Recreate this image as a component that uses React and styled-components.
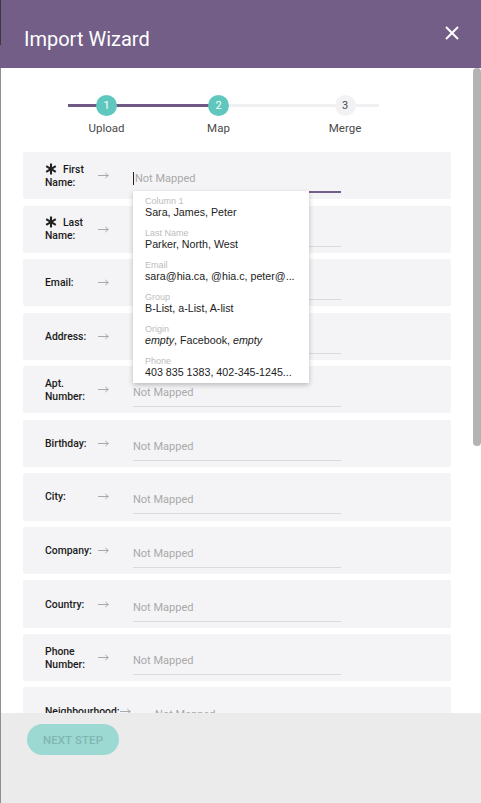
import React from "react";
import styled, { createGlobalStyle } from "styled-components";

const Global = createGlobalStyle`
  html, body { margin: 0; padding: 0; background: #fff; overflow: hidden; }
  * { box-sizing: border-box; }
`;

const Page = styled.div`
  width: 481px;
  height: 803px;
  display: flex;
  flex-direction: column;
  font-family: Roboto, "Liberation Sans", sans-serif;
`;

const Header = styled.header`
  height: 68px;
  flex: 0 0 68px;
  display: flex;
  align-items: flex-start;
  padding: 26px 22px 0 24px;
  background: linear-gradient(#3b3b3b, #3b3b3b) left top / 1px 45px no-repeat, #735e88;
`;

const Title = styled.h1`
  flex: 1;
  margin: 1px 0 0;
  font-weight: 400;
  font-size: 20px;
  line-height: 24px;
  color: #fff;
`;

const CloseButton = styled.button`
  border: 0;
  padding: 0;
  background: none;
  width: 14px;
  height: 14px;
  display: flex;
`;

const Body = styled.div`
  height: 645px;
  flex: 0 0 645px;
  display: flex;
  overflow: hidden;
  box-shadow: inset 1px 0 0 #8f8f8f;
`;

const Content = styled.div`
  flex: 1;
  padding-top: 27px;
  overflow: hidden;
`;

const ScrollTrack = styled.div`
  width: 8px;
  flex: 0 0 8px;
`;

const Thumb = styled.div`
  height: 378px;
  border-radius: 4px;
  background: #b3b3b3;
`;

const Stepper = styled.div`
  margin-left: 68px;
  width: 311px;
  display: grid;
  grid-template-columns: 77px 147px 106px;
  background: linear-gradient(to right, #6f5a86 0 150.5px, #f0f0f2 150.5px 100%) 0 9px / 100% 3px no-repeat;
`;

const Step = styled.div`
  display: flex;
  flex-direction: column;
  align-items: center;
`;

const Circle = styled.div`
  width: 21px;
  height: 21px;
  border-radius: 50%;
  display: flex;
  align-items: center;
  justify-content: center;
  font-size: 11px;
  background: ${(p) => (p.$done ? "#5fc7be" : "#f2f2f4")};
  color: ${(p) => (p.$done ? "#fff" : "#4a4a4a")};
`;

const StepLabel = styled.div`
  margin-top: 5px;
  font-size: 11.5px;
  line-height: 14px;
  color: #4a4a4a;
`;

const Rows = styled.div`
  margin-top: 17px;
  padding: 0 22px 0 23px;
  display: flex;
  flex-direction: column;
  gap: 6.26px;
`;

const Row = styled.div`
  height: 47.3px;
  flex: 0 0 47.3px;
  display: flex;
  align-items: center;
  padding-left: 22px;
  background: #f4f4f6;
  border-radius: 2px;
`;

const Label = styled.div`
  min-width: 52.5px;
  flex: 0 0 auto;
  font-size: 10.4px;
  font-weight: 500;
  line-height: 13px;
  color: #1a1a1a;
  white-space: nowrap;
`;

const Star = styled.svg`
  width: 12px;
  height: 12px;
  vertical-align: -2px;
  margin-right: 6px;
`;

const Arrow = styled.svg`
  width: 11px;
  height: 7px;
  flex: 0 0 11px;
  margin-left: 0.5px;
`;

const Field = styled.div`
  position: relative;
  width: 208px;
  height: 24px;
  margin: 11px 0 0 24px;
  padding-bottom: 3px;
  display: flex;
  align-items: center;
  border-bottom: ${(p) => (p.$focused ? "2px solid #735e88" : "1px solid #dadada")};
`;

const Caret = styled.span`
  width: 1px;
  height: 13px;
  background: #222;
  margin-right: 1px;
`;

const Placeholder = styled.span`
  font-size: 11px;
  line-height: 20px;
  color: #a9a9a9;
  white-space: nowrap;
`;

const Menu = styled.div`
  position: absolute;
  z-index: 5;
  top: 100%;
  left: 0;
  width: 176px;
  background: #fff;
  box-shadow: 0 2px 5px rgba(0, 0, 0, 0.24);
  font-family: "Liberation Sans", Arial, sans-serif;
`;

const MenuItem = styled.div`
  height: 32px;
  padding: 5px 12px 0;
`;

const MenuLabel = styled.div`
  font-size: 9px;
  line-height: 10px;
  color: #bcbcbc;
`;

const MenuValue = styled.div`
  font-size: 10.7px;
  line-height: 13px;
  color: #222;
  white-space: nowrap;
`;

const Footer = styled.footer`
  flex: 1;
  background: #ebebeb;
  padding: 11px 0 0 27px;
  box-shadow: inset 1px 0 0 #8f8f8f;
`;

const NextButton = styled.button`
  width: 92px;
  height: 31px;
  border: 0;
  border-radius: 16px;
  background: #9dd9d3;
  color: #80b6b0;
  font-family: Roboto, sans-serif;
  font-weight: 500;
  font-size: 11.5px;
  letter-spacing: 0.1px;
  padding: 0;
`;

const StarIcon = () => (
  <Star viewBox="0 0 12 12">
    <g stroke="#222" strokeWidth="2.1" strokeLinecap="butt">
      <line x1="6" y1="0.5" x2="6" y2="11.5" />
      <line x1="1.2" y1="3.2" x2="10.8" y2="8.8" />
      <line x1="1.2" y1="8.8" x2="10.8" y2="3.2" />
    </g>
  </Star>
);

const ArrowIcon = () => (
  <Arrow viewBox="0 0 11 7">
    <g stroke="#a9a9a9" strokeWidth="1" fill="none">
      <line x1="0" y1="3.5" x2="10.3" y2="3.5" />
      <polyline points="7.3,1 10.3,3.5 7.3,6" />
    </g>
  </Arrow>
);

const menuItems = [
  { label: "Column 1", value: "Sara, James, Peter" },
  { label: "Last Name", value: "Parker, North, West" },
  { label: "Email", value: "sara@hia.ca, @hia.c, peter@..." },
  { label: "Group", value: "B-List, a-List, A-list" },
  {
    label: "Origin",
    value: (
      <>
        <em>empty</em>, Facebook, <em>empty</em>
      </>
    ),
  },
  { label: "Phone", value: "403 835 1383, 402-345-1245..." },
];

const rows = [
  { lines: ["First", "Name:"], required: true, focused: true },
  { lines: ["Last", "Name:"], required: true },
  { lines: ["Email:"] },
  { lines: ["Address:"] },
  { lines: ["Apt.", "Number:"] },
  { lines: ["Birthday:"] },
  { lines: ["City:"] },
  { lines: ["Company:"] },
  { lines: ["Country:"] },
  { lines: ["Phone", "Number:"] },
  { lines: ["Neighbourhood:"] },
];

const steps = [
  { n: 1, label: "Upload", done: true },
  { n: 2, label: "Map", done: true },
  { n: 3, label: "Merge", done: false },
];

export default function App() {
  return (
    <Page>
      <Global />
      <Header>
        <Title>Import Wizard</Title>
        <CloseButton aria-label="Close">
          <svg width="14" height="14" viewBox="0 0 14 14">
            <g stroke="#fff" strokeWidth="2">
              <line x1="1" y1="1" x2="13" y2="13" />
              <line x1="13" y1="1" x2="1" y2="13" />
            </g>
          </svg>
        </CloseButton>
      </Header>
      <Body>
        <Content>
          <Stepper>
            {steps.map((s) => (
              <Step key={s.n}>
                <Circle $done={s.done}>{s.n}</Circle>
                <StepLabel>{s.label}</StepLabel>
              </Step>
            ))}
          </Stepper>
          <Rows>
            {rows.map((r, i) => (
              <Row key={i}>
                <Label>
                  {r.required && <StarIcon />}
                  {r.lines[0]}
                  {r.lines[1] && (
                    <>
                      <br />
                      {r.lines[1]}
                    </>
                  )}
                </Label>
                <ArrowIcon />
                <Field $focused={r.focused}>
                  {r.focused && <Caret />}
                  <Placeholder>Not Mapped</Placeholder>
                  {r.focused && (
                    <Menu>
                      {menuItems.map((m) => (
                        <MenuItem key={m.label}>
                          <MenuLabel>{m.label}</MenuLabel>
                          <MenuValue>{m.value}</MenuValue>
                        </MenuItem>
                      ))}
                    </Menu>
                  )}
                </Field>
              </Row>
            ))}
          </Rows>
        </Content>
        <ScrollTrack>
          <Thumb />
        </ScrollTrack>
      </Body>
      <Footer>
        <NextButton>NEXT STEP</NextButton>
      </Footer>
    </Page>
  );
}
